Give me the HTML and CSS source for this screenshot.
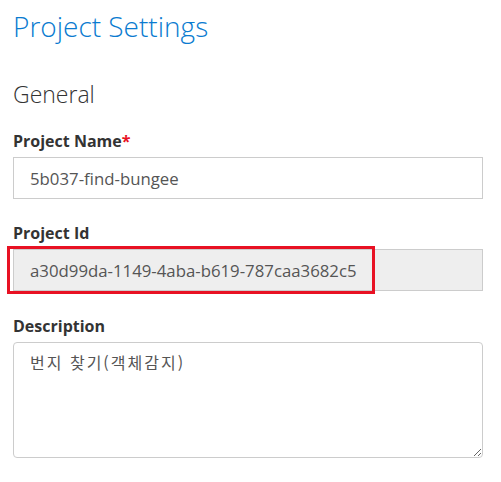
FILE: index.html
```html
<!DOCTYPE html>
<html lang="ko">
<head>
<meta charset="utf-8">
<title>Project Settings</title>
<link rel="stylesheet" href="styles.css">
</head>
<body>
<div class="page">
  <h1 class="title">Project Settings</h1>
  <h2 class="section">General</h2>
  <div class="field field-first">
    <label class="label">Project Name<span class="req">*</span></label>
    <input class="input" type="text" value="5b037-find-bungee">
  </div>
  <div class="field">
    <label class="label">Project Id</label>
    <div class="highlight-wrap">
      <input class="input input-readonly" type="text" value="a30d99da-1149-4aba-b619-787caa3682c5" readonly>
      <div class="highlight"></div>
    </div>
  </div>
  <div class="field field-desc">
    <label class="label">Description</label>
    <textarea class="textarea">번지 찾기(객체감지)</textarea>
  </div>
</div>
</body>
</html>
```

FILE: styles.css
```css
* { box-sizing: border-box; }
html, body { margin: 0; padding: 0; background: #fff; }
body {
  font-family: "Open Sans", "Noto Sans CJK KR", sans-serif;
  color: #333;
}
.page {
  width: 483px;
  padding: 6px 0 0 13px;
}
.title {
  margin: 0;
  font-size: 28px;
  font-weight: 300;
  line-height: 40px;
  color: #0a7bd0;
}
.section {
  margin: 32px 0 0 0;
  font-size: 23px;
  font-weight: 300;
  line-height: 32px;
  color: #333;
}
.field {
  display: flex;
  flex-direction: column;
  margin-top: 23px;
}
.field-first { margin-top: 20px; }
.field-desc { margin-top: 24px; }
.label {
  display: block;
  margin: 0 0 5px 0;
  font-size: 16px;
  font-weight: 700;
  line-height: 22px;
  color: #333;
}
.req { color: #e81123; }
.input {
  display: block;
  width: 100%;
  height: 42px;
  margin: 0;
  padding: 0 16px;
  border: 1px solid #ccc;
  border-radius: 0;
  font-family: "Open Sans", sans-serif;
  font-size: 16.8px;
  color: #555;
  background: #fff;
  outline: none;
}
.input-readonly { background: #eee; }
.highlight-wrap { position: relative; }
.highlight {
  position: absolute;
  left: -6px;
  top: -3px;
  width: 368px;
  height: 48px;
  border: 3px solid #e81123;
  pointer-events: none;
}
.textarea {
  display: block;
  width: 100%;
  height: 116px;
  margin: 0;
  padding: 8px 16px;
  border: 1px solid #ccc;
  border-radius: 4px;
  font-family: "Noto Sans CJK KR", "Open Sans", sans-serif;
  font-size: 16px;
  letter-spacing: 2px;
  line-height: 22px;
  color: #555;
  resize: vertical;
  outline: none;
}
```
